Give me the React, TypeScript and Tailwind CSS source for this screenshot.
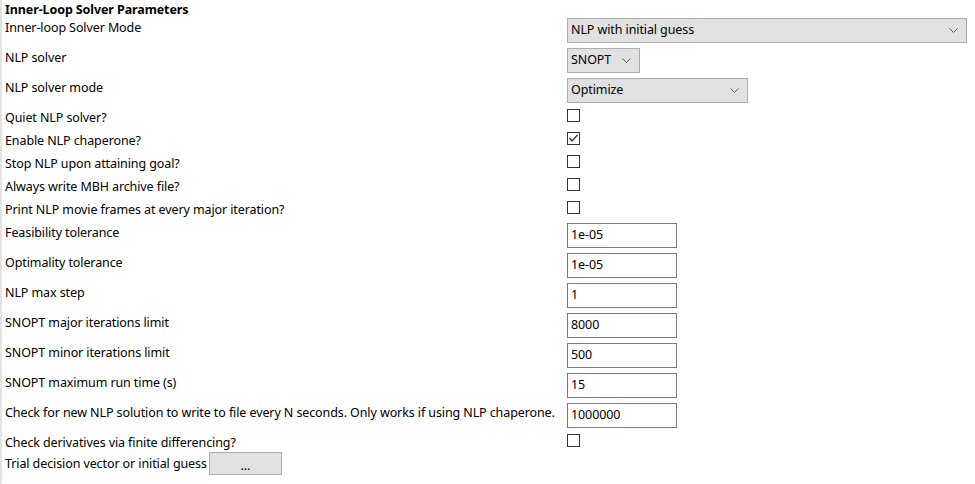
import React from "react";

const font = { fontFamily: '"Noto Sans", "Segoe UI", sans-serif' };

const Chevron = () => (
  <svg width="9" height="5" viewBox="0 0 9 5" className="shrink-0">
    <path d="M0.5 0.5 L4.5 4.5 L8.5 0.5" fill="none" stroke="#606060" strokeWidth="1" />
  </svg>
);

const Select = ({ value, w }: { value: string; w: string }) => (
  <div className={`${w} h-[25px] bg-[#e1e1e1] border border-[#adadad] flex items-center justify-between pl-[3px] pr-[8px]`}>
    <span>{value}</span>
    <Chevron />
  </div>
);

const Check = ({ checked }: { checked?: boolean }) => (
  <div className="w-[13px] h-[13px] border border-[#333333] bg-white flex items-center justify-center">
    {checked && (
      <svg width="11" height="11" viewBox="0 0 11 11">
        <path d="M1.5 5 L4 8 L9.5 2" fill="none" stroke="#333333" strokeWidth="1.3" />
      </svg>
    )}
  </div>
);

const Input = ({ value }: { value: string }) => (
  <div className="w-[110px] h-[25px] border border-[#7a7a7a] bg-white flex items-center pl-[3px]">
    {value}
  </div>
);

const Label = ({ children }: { children: React.ReactNode }) => (
  <div className="w-[565px] pl-[3px] pt-[1px] whitespace-nowrap leading-[17px]">{children}</div>
);

const selects = [
  { label: "Inner-loop Solver Mode", value: "NLP with initial guess", w: "w-[400px]" },
  { label: "NLP solver", value: "SNOPT", w: "w-[73px]" },
  { label: "NLP solver mode", value: "Optimize", w: "w-[181px]" },
];

const checks = [
  { label: "Quiet NLP solver?" },
  { label: "Enable NLP chaperone?", checked: true },
  { label: "Stop NLP upon attaining goal?" },
  { label: "Always write MBH archive file?" },
  { label: "Print NLP movie frames at every major iteration?" },
];

const inputs = [
  { label: "Feasibility tolerance", value: "1e-05" },
  { label: "Optimality tolerance", value: "1e-05" },
  { label: "NLP max step", value: "1" },
  { label: "SNOPT major iterations limit", value: "8000" },
  { label: "SNOPT minor iterations limit", value: "500" },
  { label: "SNOPT maximum run time (s)", value: "15" },
  { label: "Check for new NLP solution to write to file every N seconds. Only works if using NLP chaperone.", value: "1000000" },
];

export default function App() {
  return (
    <div
      className="w-[975px] h-[484px] bg-white border-l-2 border-[#e3e3e3] text-[12.5px] tracking-[-0.1px] text-black overflow-hidden"
      style={font}
    >
      <div className="h-[18px] pl-[3px] pt-[1px] font-bold leading-[17px]">Inner-Loop Solver Parameters</div>
      {selects.map((s) => (
        <div key={s.label} className="flex h-[30px] items-start">
          <Label>{s.label}</Label>
          <Select value={s.value} w={s.w} />
        </div>
      ))}
      {checks.map((c) => (
        <div key={c.label} className="flex h-[23px] items-start">
          <Label>{c.label}</Label>
          <div className="pt-[1px]">
            <Check checked={c.checked} />
          </div>
        </div>
      ))}
      {inputs.map((i) => (
        <div key={i.label} className="flex h-[30px] items-start">
          <Label>{i.label}</Label>
          <Input value={i.value} />
        </div>
      ))}
      <div className="flex h-[19px] items-start">
        <Label>Check derivatives via finite differencing?</Label>
        <div className="pt-[1px]">
          <Check />
        </div>
      </div>
      <div className="flex items-center pl-[3px] leading-[17px]">
        <span>Trial decision vector or initial guess</span>
        <div className="ml-[2px] w-[73px] h-[23px] bg-[#e1e1e1] border border-[#adadad] flex items-end justify-center pb-[2px] leading-[13px]">
          ...
        </div>
      </div>
    </div>
  );
}
